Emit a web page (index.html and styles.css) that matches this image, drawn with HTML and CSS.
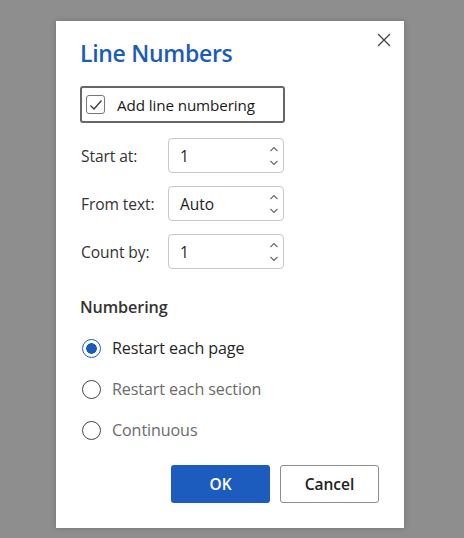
FILE: index.html
```html
<!DOCTYPE html>
<html>
<head>
<meta charset="utf-8">
<link rel="stylesheet" href="styles.css">
</head>
<body>
<div class="dialog">
  <button class="close" aria-label="Close">
    <svg width="14" height="14" viewBox="0 0 14 14"><path d="M1 1L13 13M13 1L1 13" stroke="#444" stroke-width="1.3" fill="none"/></svg>
  </button>
  <h1 class="title">Line Numbers</h1>
  <label class="check-wrap">
    <span class="checkbox">
      <svg width="14" height="12" viewBox="0 0 14 12"><path d="M1.5 6.5L5 10L12.5 1.5" stroke="#333" stroke-width="1.2" fill="none"/></svg>
    </span>
    <span class="check-label">Add line numbering</span>
  </label>
  <div class="fields">
    <div class="field">
      <span class="field-label">Start at:</span>
      <div class="spin"><span class="spin-val">1</span><span class="arrows"><svg width="10" height="22" viewBox="0 0 10 22"><path d="M1.5 6L5 2.5L8.5 6M1.5 16L5 19.5L8.5 16" stroke="#666" stroke-width="1.1" fill="none"/></svg></span></div>
    </div>
    <div class="field">
      <span class="field-label">From text:</span>
      <div class="spin"><span class="spin-val">Auto</span><span class="arrows"><svg width="10" height="22" viewBox="0 0 10 22"><path d="M1.5 6L5 2.5L8.5 6M1.5 16L5 19.5L8.5 16" stroke="#666" stroke-width="1.1" fill="none"/></svg></span></div>
    </div>
    <div class="field">
      <span class="field-label">Count by:</span>
      <div class="spin"><span class="spin-val">1</span><span class="arrows"><svg width="10" height="22" viewBox="0 0 10 22"><path d="M1.5 6L5 2.5L8.5 6M1.5 16L5 19.5L8.5 16" stroke="#666" stroke-width="1.1" fill="none"/></svg></span></div>
    </div>
  </div>
  <h2 class="section">Numbering</h2>
  <div class="radios">
    <div class="radio-row"><span class="radio checked"></span><span class="radio-label">Restart each page</span></div>
    <div class="radio-row"><span class="radio"></span><span class="radio-label muted">Restart each section</span></div>
    <div class="radio-row"><span class="radio"></span><span class="radio-label muted">Continuous</span></div>
  </div>
  <div class="buttons">
    <button class="btn primary">OK</button>
    <button class="btn secondary">Cancel</button>
  </div>
</div>
</body>
</html>
```
FILE: styles.css
```css
html, body {
  margin: 0;
  padding: 0;
  height: 100%;
}
body {
  background: #8e8e8e;
  font-family: "Open Sans", "Noto Sans", sans-serif;
  color: #262626;
}
.dialog {
  position: relative;
  margin-left: 56px;
  margin-top: 21px;
  width: 348px;
  height: 507px;
  box-sizing: border-box;
  background: #fff;
  padding: 16px 24px 0 24px;
  box-shadow: 0 0 6px rgba(0,0,0,0.2);
}
.close {
  position: absolute;
  top: 12px;
  right: 13px;
  width: 14px;
  height: 14px;
  padding: 0;
  border: none;
  background: none;
  display: flex;
}
.title {
  margin: 0;
  font-size: 23px;
  font-weight: 600;
  color: #1d5bb8;
  letter-spacing: -0.3px;
  line-height: 32px;
  height: 32px;
}
.check-wrap {
  margin-top: 17px;
  width: 205px;
  height: 37px;
  box-sizing: border-box;
  border: 2px solid #666;
  border-radius: 3px;
  display: flex;
  align-items: center;
  padding-left: 4px;
}
.checkbox {
  width: 19px;
  height: 19px;
  box-sizing: border-box;
  border: 1px solid #777;
  border-radius: 3px;
  display: flex;
  align-items: center;
  justify-content: center;
}
.check-label {
  margin-left: 12px;
  font-size: 15.2px;
  color: #1a1a1a;
  letter-spacing: -0.1px;
}
.fields {
  margin-top: 15px;
  display: flex;
  flex-direction: column;
  gap: 13px;
}
.field {
  display: flex;
  align-items: center;
  height: 35px;
}
.field-label {
  width: 87px;
  font-size: 15.6px;
  color: #333;
  letter-spacing: -0.1px;
  padding-left: 1px;
}
.spin {
  width: 116px;
  height: 35px;
  box-sizing: border-box;
  border: 1px solid #c8c8c8;
  border-radius: 4px;
  display: flex;
  align-items: center;
  justify-content: space-between;
  padding: 0 4px 0 11px;
}
.spin-val {
  font-size: 15.5px;
  color: #222;
}
.arrows {
  display: flex;
}
.section {
  margin: 28px 0 0 0;
  font-size: 16.2px;
  font-weight: 600;
  color: #333;
  line-height: 20px;
  letter-spacing: -0.1px;
}
.radios {
  margin-top: 21px;
  display: flex;
  flex-direction: column;
  gap: 21px;
}
.radio-row {
  display: flex;
  align-items: center;
  height: 20px;
}
.radio {
  width: 19px;
  height: 19px;
  box-sizing: border-box;
  border: 1.3px solid #444;
  border-radius: 50%;
  margin-left: 2px;
  position: relative;
}
.radio.checked {
  border-color: #1d5bb8;
  background: radial-gradient(circle, #1d5bb8 0 5px, #fff 5.6px);
}
.radio-label {
  margin-left: 11px;
  font-size: 16.1px;
  color: #262626;
  letter-spacing: -0.1px;
}
.radio-label.muted {
  color: #6b6b6b;
}
.buttons {
  margin-top: 25px;
  display: flex;
  justify-content: flex-end;
  gap: 10px;
  padding-right: 1px;
}
.btn {
  width: 99px;
  height: 38px;
  box-sizing: border-box;
  border-radius: 3px;
  font-family: "Open Sans", "Noto Sans", sans-serif;
  font-size: 15.5px;
  font-weight: 600;
}
.primary {
  background: #1c5cbf;
  color: #fff;
  border: none;
}
.secondary {
  background: #fff;
  color: #222;
  border: 1px solid #8c8c8c;
}
```
